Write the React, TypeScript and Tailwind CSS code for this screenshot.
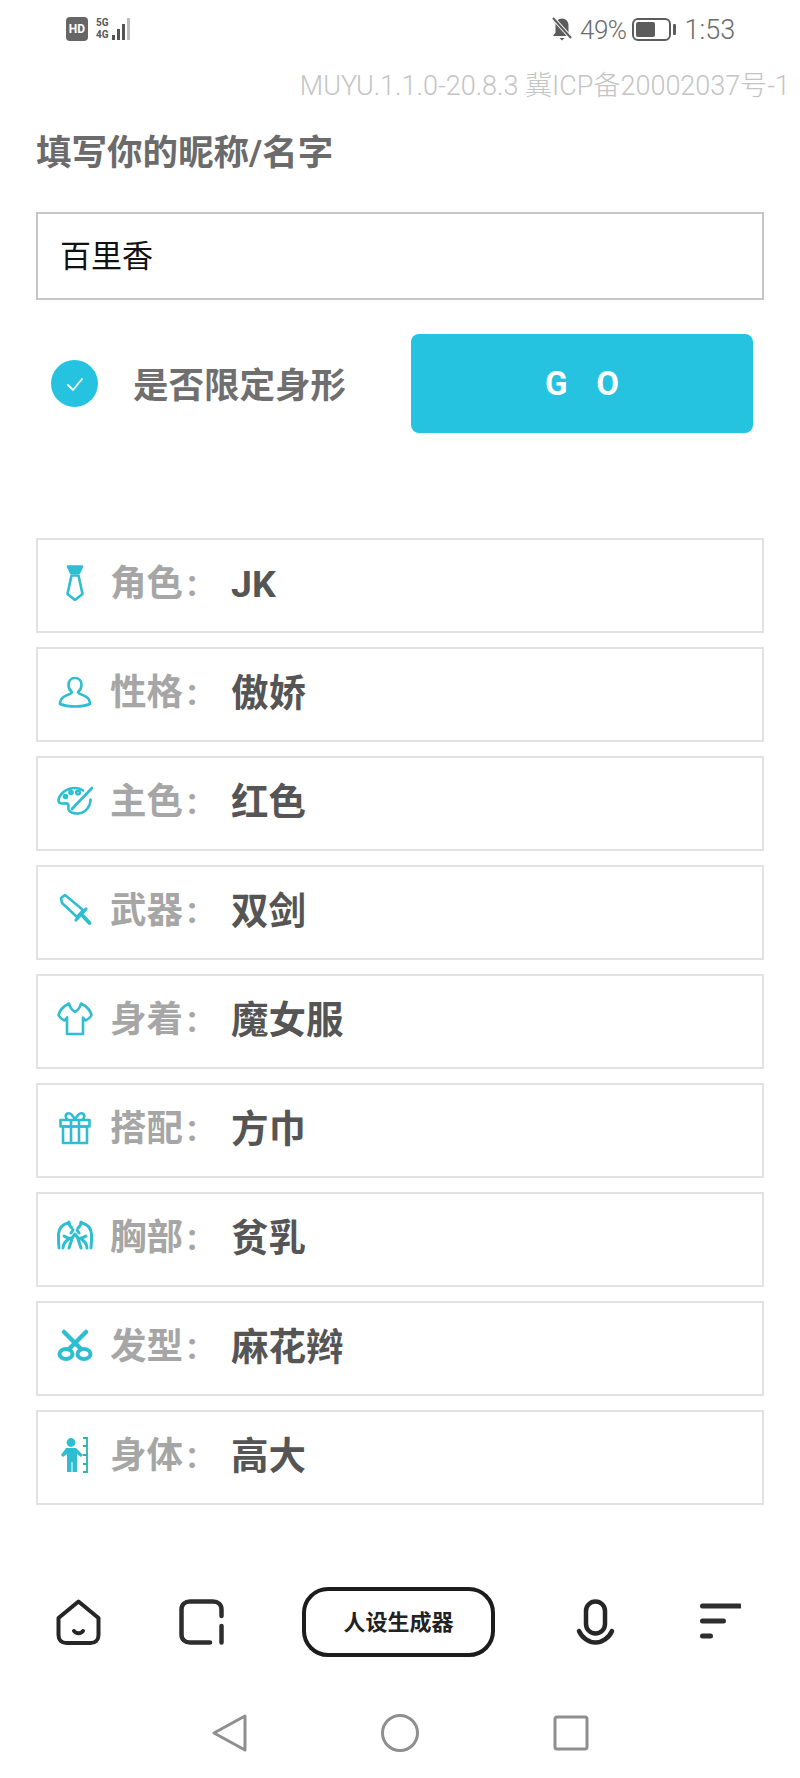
import type { ReactNode } from 'react';

const FONT = "font-['Roboto','Noto_Sans_CJK_SC',sans-serif]";

const TieIcon = () => (
    <svg width="36" height="36" viewBox="0 0 36 36" fill="none" stroke="#2fbdd2" strokeWidth="2.600" strokeLinejoin="round">
        <path d="M11 1.500h14l-3 6.500h-8z" fill="#2fbdd2" />
        <path d="M14.500 10.500h7l4 18.500-7.500 6-7.500-6z" />
    </svg>
);

const UserIcon = () => (
    <svg width="36" height="36" viewBox="0 0 36 36" fill="none" stroke="#2fbdd2" strokeWidth="2.600" strokeLinejoin="round">
        <path d="M18 4c3.800 0 6.500 3 6.500 7 0 3-1.500 5.500-3.500 7 0 2 5 2.500 8.500 5 2.500 1.800 3.500 4 3.500 7-4 1.600-10 2.500-15 2.500S7 31.600 3 30c0-3 1-5.200 3.500-7 3.500-2.500 8.500-3 8.500-5-2-1.500-3.500-4-3.500-7 0-4 2.700-7 6.500-7z" />
    </svg>
);

const PaletteIcon = () => (
    <svg width="36" height="36" viewBox="0 0 36 36" fill="none" stroke="#2fbdd2" strokeWidth="2.600" strokeLinecap="round">
        <path d="M26 7.500C20 3 10 5 4.500 11 .5 15.500 .5 20 4.500 20.500c3 .4 5-1 6.500 .5s-1 4 1 6.500c3 3.500 11 4.500 16 .5 3.500-2.800 5.500-7 5.500-11.500" />
        <path d="M35 5 15 26" strokeWidth="2.800" />
        <circle cx="8.500" cy="13.500" r="1.500" />
        <circle cx="14" cy="9.500" r="1.500" />
        <circle cx="21" cy="9.500" r="1.800" />
    </svg>
);

const SwordIcon = () => (
    <svg width="36" height="36" viewBox="0 0 36 36" fill="none" stroke="#2fbdd2" strokeWidth="2.600" strokeLinejoin="round" strokeLinecap="round">
        <path d="M4 6 8 3l18 15-6 7L5 11z" />
        <path d="M19 28 29 17" strokeWidth="3.200" />
        <path d="M26 24l6.500 7" strokeWidth="4" />
    </svg>
);

const ShirtIcon = () => (
    <svg width="36" height="36" viewBox="0 0 36 36" fill="none" stroke="#2fbdd2" strokeWidth="2.600" strokeLinejoin="round">
        <path d="M12 2.500C7 5 3 8 1.500 14c1.500 3 3.500 4.500 6 5.500l2.500-3V33h16V16.500l2.500 3c2.500-1 4.500-2.500 6-5.500C33 8 29 5 24 2.500c-.8 3.500-3 6.500-6 8.500-3-2-5.200-5-6-8.500z" />
    </svg>
);

const GiftIcon = () => (
    <svg width="36" height="36" viewBox="0 0 36 36" fill="none" stroke="#2fbdd2" strokeWidth="2.600" strokeLinejoin="round">
        <rect x="3.500" y="10" width="29" height="6.500" />
        <rect x="6" y="16.500" width="24" height="16.500" />
        <path d="M14 10v23M22 10v23" />
        <path d="M18 10c-2-5-5-7.500-7.500-6.500S8 8.500 11 10M18 10c2-5 5-7.500 7.500-6.500S28 8.500 25 10" />
    </svg>
);

const ChestIcon = () => (
    <svg width="36" height="36" viewBox="0 0 36 36" fill="none" stroke="#2fbdd2" strokeWidth="3" strokeLinecap="round" strokeLinejoin="round">
        <path d="M11 4C5 5.500 2 10 1.500 15c-.3 4 .2 9 .5 14" />
        <path d="M25 4c6 1.500 9 6 9.500 11 .3 4-.2 9-.5 14" />
        <path d="M12 3c0 3 1 4.500 3 6M24 3c0 3-1 4.500-3 6" />
        <path d="M6 29c0-5 3-7 6-9M30 29c0-5-3-7-6-9" />
        <path d="M7 17c3 2 5 3 8 2l3-4 3 4c3 1 5 0 8-2" />
        <path d="M14 14l2-3M22 14l-2-3M12 29l3-9M24 29l-3-9" />
    </svg>
);

const ScissorsIcon = () => (
    <svg width="36" height="36" viewBox="0 0 36 36" fill="none" stroke="#2fbdd2" strokeLinecap="round">
        <path d="M7 4 24 21M29 4 12 21" strokeWidth="4.500" />
        <ellipse cx="9" cy="26" rx="6.500" ry="5" strokeWidth="4" />
        <ellipse cx="27" cy="26" rx="6.500" ry="5" strokeWidth="4" />
    </svg>
);

const BodyIcon = () => (
    <svg width="36" height="36" viewBox="0 0 36 36" fill="none">
        <circle cx="14" cy="5.500" r="4.400" fill="#2fbdd2" />
        <path d="M9 11h10l7 7-2 2-4-3v18h-4.500V25h-1v10H10V17l-4 3-2-2z" fill="#2fbdd2" />
        <path d="M26 1h4v34h-4M26 9h4M26 18h4M26 27h4" stroke="#2bb5a8" strokeWidth="1.800" />
    </svg>
);

type Trait = { icon: ReactNode; label: string; value: string };

const traits: Trait[] = [
    { icon: <TieIcon />, label: '角色', value: 'JK' },
    { icon: <UserIcon />, label: '性格', value: '傲娇' },
    { icon: <PaletteIcon />, label: '主色', value: '红色' },
    { icon: <SwordIcon />, label: '武器', value: '双剑' },
    { icon: <ShirtIcon />, label: '身着', value: '魔女服' },
    { icon: <GiftIcon />, label: '搭配', value: '方巾' },
    { icon: <ChestIcon />, label: '胸部', value: '贫乳' },
    { icon: <ScissorsIcon />, label: '发型', value: '麻花辫' },
    { icon: <BodyIcon />, label: '身体', value: '高大' },
];

function StatusBar() {
    return (
        <div className="h-[72px] flex items-start pt-[17px] pl-[66px] text-[#6b6b6b]">
            <div className="w-[22px] h-[24px] rounded-[4px] bg-[#666666] text-white text-[12px] font-bold leading-[24px] text-center">HD</div>
            <div className="ml-[8px] h-[24px] flex">
                <div className="w-[14px] flex flex-col text-[10px] font-bold leading-[12px] text-[#555555]">
                    <span>5G</span>
                    <span>4G</span>
                </div>
                <svg width="20" height="24" viewBox="0 0 20 24" className="ml-[2px]">
                    <rect x="0" y="18" width="3" height="5" fill="#555555" />
                    <rect x="5" y="12" width="3" height="11" fill="#555555" />
                    <rect x="10" y="7" width="3" height="16" fill="#555555" />
                    <rect x="15" y="1" width="3" height="22" fill="#bdbdbd" />
                </svg>
            </div>
            <svg width="22" height="24" viewBox="0 0 22 24" className="ml-[419px]">
                <path d="M11 1.500c4 0 6.500 3 6.500 7v7l2.500 3.500H2l2.500-3.500v-7c0-4 2.500-7 6.500-7z" fill="#5c5c5c" />
                <path d="M8.500 21h5l-2.500 2.500z" fill="#5c5c5c" />
                <path d="M2 1l18 20" stroke="#ffffff" strokeWidth="4" />
                <path d="M2 1l18 20" stroke="#5c5c5c" strokeWidth="2" />
            </svg>
            <span className="ml-[7px] text-[26px] leading-[26px] font-light tracking-[-0.5px]">49%</span>
            <div className="ml-[5px] h-[24px] flex items-center">
                <div className="w-[39px] h-[23px] rounded-[6px] border-[2.500px] border-[#5c5c5c] p-[2px]">
                    <div className="w-[19px] h-full rounded-[2px] bg-[#5c5c5c]" />
                </div>
                <div className="ml-[2px] w-[3px] h-[11px] rounded-[1px] bg-[#5c5c5c]" />
            </div>
            <span className="ml-[9px] text-[27px] leading-[26px] font-light">1:53</span>
        </div>
    );
}

function BottomNav() {
    return (
        <div className="mt-[82px] h-[70px] pl-[56px] flex items-center gap-[78px]">
            <svg width="45" height="46" viewBox="0 0 45 46" fill="none" stroke="#262626" strokeWidth="4" strokeLinejoin="round">
                <path d="M22.500 2.500 42.500 19v17c0 5-3 8-8 8h-24c-5 0-8-3-8-8V19z" />
                <path d="M18 32c2 3 7 3 9 0" strokeLinecap="round" />
            </svg>
            <svg width="45" height="46" viewBox="0 0 45 46" fill="none" stroke="#2e2e2e" strokeWidth="4.500" strokeLinecap="round">
                <path d="M31 43.500H11c-5 0-8.500-3-8.500-8v-25c0-5 3.500-8 8.500-8h23c5 0 8.500 3 8.500 8V17" />
                <path d="M42.500 27v16.500" />
            </svg>
            <div className="w-[193px] h-[70px] rounded-[26px] border-[4px] border-[#1c1c1c] bg-white flex items-center justify-center text-[22px] font-bold text-[#222222]">
                人设生成器
            </div>
            <svg width="45" height="46" viewBox="0 0 45 46" fill="none" stroke="#262626" strokeWidth="4.500" strokeLinecap="round">
                <rect x="13" y="2.500" width="19" height="32" rx="9.500" />
                <path d="M6 32c3 7 10 11.500 16.500 11.500S36 39 39 32" />
            </svg>
            <svg width="45" height="40" viewBox="0 0 45 40" fill="none" stroke="#2e2e2e" strokeWidth="5" strokeLinecap="round">
                <path d="M6.500 4h37M6.500 19h21M6.500 34h8" />
            </svg>
        </div>
    );
}

function SystemNav() {
    return (
        <div className="mt-[57px] flex justify-center items-center gap-[133px]">
            <svg width="38" height="38" viewBox="0 0 38 38" fill="none" stroke="#8f8f8f" strokeWidth="3" strokeLinejoin="round">
                <path d="M35 2 4 19l31 17z" />
            </svg>
            <svg width="38" height="38" viewBox="0 0 38 38" fill="none" stroke="#8f8f8f" strokeWidth="3">
                <circle cx="19" cy="19" r="17.500" />
            </svg>
            <svg width="38" height="38" viewBox="0 0 38 38" fill="none" stroke="#8f8f8f" strokeWidth="3" strokeLinejoin="round">
                <rect x="3" y="3" width="32" height="32" rx="2" />
            </svg>
        </div>
    );
}

export default function App() {
    return (
        <div className={`w-[800px] h-[1778px] overflow-hidden bg-white ${FONT}`}>
            <StatusBar />
            <div className="pr-[10px] text-right text-[27px] leading-[28px] font-light text-[#c4c4c4] whitespace-nowrap">
                MUYU.1.1.0-20.8.3 冀ICP备20002037号-1
            </div>
            <h1 className="mt-[33px] pl-[36px] text-[35.500px] leading-[40px] font-bold text-[#6b6b6b]">填写你的昵称/名字</h1>

            <div className="mt-[39px] mx-[36px] h-[88px] border-2 border-[#c6c6c6] flex items-center pl-[22px] pt-[2px] text-[31px] text-[#111111]">
                百里香
            </div>

            <div className="mt-[34px] h-[99px] flex items-center pl-[51px] pr-[47px]">
                <div className="w-[47px] h-[47px] rounded-full bg-[#26c3e0] flex items-center justify-center">
                    <svg width="22" height="22" viewBox="0 0 22 22" fill="none" stroke="#ffffff" strokeWidth="1.800" strokeLinecap="round">
                        <path d="M4 12l5 5 9-11" />
                    </svg>
                </div>
                <span className="ml-[35px] pt-[6px] text-[35.500px] font-bold text-[#6f6f6f]">是否限定身形</span>
                <button className="ml-auto w-[342px] h-[99px] rounded-[8px] bg-[#26c3e0] text-white text-[33px] font-bold pl-[29px] tracking-[29px]">
                    GO
                </button>
            </div>

            <div className="mt-[105px] mx-[36px] flex flex-col gap-[14px]">
                {traits.map((t) => (
                    <div key={t.label} className="h-[95px] border-2 border-[#e2e2e2] flex items-center pb-[6px] pl-[19px]">
                        <div className="w-[36px] h-[36px] flex-none">{t.icon}</div>
                        <div className="ml-[17px] mt-[4px] w-[122px] flex-none text-[36.500px] font-bold text-[#a6a6a6]">
                            {t.label}
                            <span className="ml-[4px]">:</span>
                        </div>
                        <div className="mt-[4px] -ml-[1px] text-[37.500px] font-bold text-[#555555]">{t.value}</div>
                    </div>
                ))}
            </div>

            <BottomNav />
            <SystemNav />
        </div>
    );
}
